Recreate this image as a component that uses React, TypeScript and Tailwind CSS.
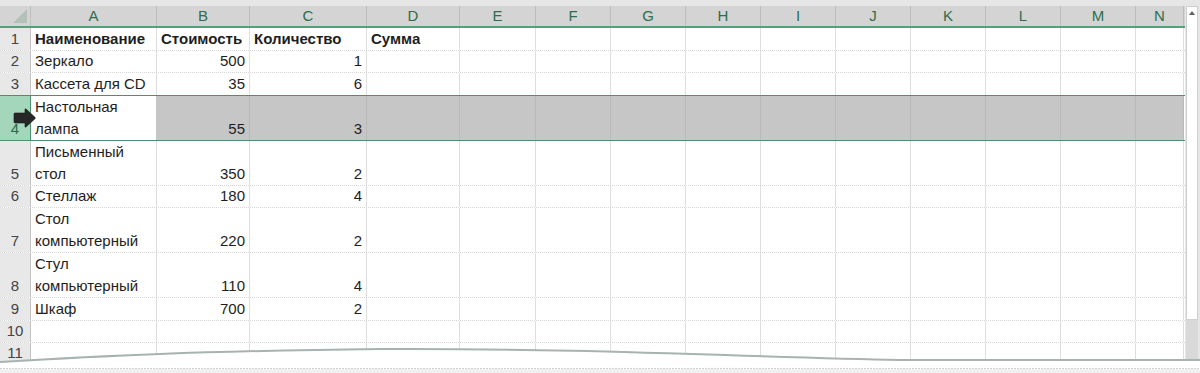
const COLS = [
  { key: "A", w: 126 },
  { key: "B", w: 93 },
  { key: "C", w: 117 },
  { key: "D", w: 93 },
  { key: "E", w: 76 },
  { key: "F", w: 75 },
  { key: "G", w: 75 },
  { key: "H", w: 75 },
  { key: "I", w: 75 },
  { key: "J", w: 75 },
  { key: "K", w: 75 },
  { key: "L", w: 75 },
  { key: "M", w: 75 },
  { key: "N", w: 48 },
];

type Row = {
  n: number;
  h: number;
  name?: string[];
  cost?: number;
  qty?: number;
  bold?: boolean;
  selected?: boolean;
  aboveSelected?: boolean;
};

const ROWS: Row[] = [
  { n: 1, h: 23, bold: true },
  { n: 2, h: 22, name: ["Зеркало"], cost: 500, qty: 1 },
  { n: 3, h: 23, name: ["Кассета для CD"], cost: 35, qty: 6, aboveSelected: true },
  { n: 4, h: 45, name: ["Настольная", "лампа"], cost: 55, qty: 3, selected: true },
  { n: 5, h: 45, name: ["Письменный", "стол"], cost: 350, qty: 2 },
  { n: 6, h: 22, name: ["Стеллаж"], cost: 180, qty: 4 },
  { n: 7, h: 45, name: ["Стол", "компьютерный"], cost: 220, qty: 2 },
  { n: 8, h: 45, name: ["Стул", "компьютерный"], cost: 110, qty: 4 },
  { n: 9, h: 23, name: ["Шкаф"], cost: 700, qty: 2 },
  { n: 10, h: 22 },
  { n: 11, h: 22 },
];

const HEADINGS = ["Наименование", "Стоимость", "Количество", "Сумма"];

function cellText(row: Row, col: number): { lines: string[]; right: boolean } {
  if (row.bold) return { lines: col < 4 ? [HEADINGS[col]] : [], right: false };
  if (col === 0) return { lines: row.name ?? [], right: false };
  if (col === 1 && row.cost !== undefined) return { lines: [String(row.cost)], right: true };
  if (col === 2 && row.qty !== undefined) return { lines: [String(row.qty)], right: true };
  return { lines: [], right: false };
}

function SheetRow({ row }: { row: Row }) {
  const sel = row.selected;
  return (
    <div
      className={
        "flex " +
        (sel || row.aboveSelected
          ? "border-b border-[#4e8f6c]"
          : "border-b border-dotted border-[#d6d6d6]")
      }
      style={{ height: row.h }}
    >
      <div
        className={
          "flex w-[31px] shrink-0 items-end justify-center border-r leading-[22px] " +
          (sel
            ? "border-[#4e8f6c] bg-[#a3d6ba] text-[#2d6b49]"
            : "border-[#c4c4c4] bg-[#e8e8e8] text-[#444]")
        }
      >
        {row.n}
      </div>
      {COLS.map((c, i) => {
        const { lines, right } = cellText(row, i);
        const active = sel && i === 0;
        return (
          <div
            key={c.key}
            className={
              "flex shrink-0 flex-col justify-end overflow-visible whitespace-nowrap border-r px-[4px] leading-[22px] " +
              (right ? "items-end " : "items-start ") +
              (row.bold ? "font-bold " : "") +
              (active
                ? "border-[#c6c6c6] bg-white"
                : sel
                ? "border-[#b9b9b9] bg-[#c6c6c6]"
                : "border-[#dedede] bg-white")
            }
            style={{ width: c.w }}
          >
            {lines.map((l) => (
              <span key={l}>{l}</span>
            ))}
          </div>
        );
      })}
    </div>
  );
}

export default function App() {
  return (
    <div
      className="relative h-[373px] w-[1200px] overflow-hidden bg-[#e6e6e6] text-[15px] text-[#1e1e1e]"
      style={{ fontFamily: '"Liberation Sans", Arial, sans-serif' }}
    >
      <div className="h-[6px]" />
      <div className="flex">
        <div className="w-[1185px] shrink-0">
          {/* column headers */}
          <div className="flex h-[22px] border-b-2 border-[#5b9c79] bg-[#d4d4d4]">
            <div className="relative w-[31px] shrink-0 border-r border-[#c0c0c0]">
              <svg className="absolute bottom-[3px] right-[3px]" width="14" height="14" viewBox="0 0 14 14">
                <polygon points="14,0 14,14 0,14" fill="#b4c0b9" />
              </svg>
            </div>
            {COLS.map((c) => (
              <div
                key={c.key}
                className="flex shrink-0 items-center justify-center border-r border-[#bdbdbd] text-[#2f6e4c]"
                style={{ width: c.w }}
              >
                {c.key}
              </div>
            ))}
          </div>
          <div className="bg-white">
            {ROWS.map((r) => (
              <SheetRow key={r.n} row={r} />
            ))}
          </div>
        </div>
        {/* scrollbar */}
        <div className="flex w-[15px] shrink-0 flex-col bg-[#e6e6e6] pl-[1px]">
          <div className="flex h-[314px] w-[12px] flex-col border border-[#cfcfcf] bg-white">
            <div className="flex h-[12px] items-center justify-center">
              <svg width="6" height="4" viewBox="0 0 6 4">
                <polygon points="0,4 3,0 6,4" fill="#606060" />
              </svg>
            </div>
          </div>
          <div className="h-[60px] w-[12px] bg-[#d9d9d9]" />
        </div>
      </div>

      {/* row select cursor */}
      <svg className="absolute left-[13px] top-[108px]" width="23" height="20" viewBox="0 0 23 20">
        <path
          d="M1 6 Q1 5 2 5 L12 5 L12 1.5 Q12 0.5 13 1 L22 9.3 Q22.8 10 22 10.7 L13 19 Q12 19.5 12 18.5 L12 15 L2 15 Q1 15 1 14 Z"
          fill="#262626"
          stroke="#1a1a1a"
          strokeWidth="0.6"
        />
      </svg>

      {/* torn edge */}
      <svg className="absolute bottom-0 left-0" width="1200" height="30" viewBox="0 0 1200 30">
        <path
          d="M0 19 C 100 13, 200 8, 380 6 C 580 5, 750 14, 900 17 L 1200 17 L 1200 30 L 0 30 Z"
          fill="#ffffff"
        />
        <path
          d="M0 19 C 100 13, 200 8, 380 6 C 580 5, 750 14, 900 17 L 1200 17"
          fill="none"
          stroke="#a7b4ae"
          strokeWidth="2"
        />
        <line x1="0" y1="25.5" x2="1200" y2="25.5" stroke="#d2d2d2" strokeDasharray="2 1" />
        <rect x="0" y="26" width="1200" height="4" fill="#f1f1f1" />
      </svg>
    </div>
  );
}
